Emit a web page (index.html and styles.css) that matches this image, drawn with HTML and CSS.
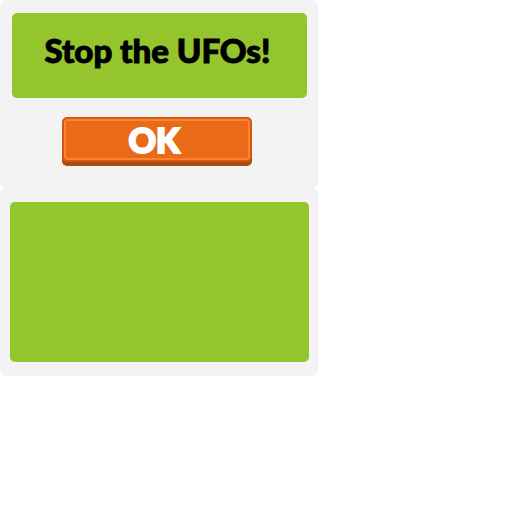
FILE: index.html
```
<!DOCTYPE html>
<html lang="en">
<head>
<meta charset="utf-8">
<meta name="viewport" content="width=device-width, initial-scale=1">
<title>Stop the UFOs!</title>
<link rel="stylesheet" href="styles.css">
</head>
<body>
<main class="stack">
  <section class="panel panel-intro">
    <div class="banner"><h1 class="title">Stop the UFOs!</h1></div>
    <button class="ok" type="button">OK</button>
  </section>
  <section class="panel panel-board">
    <div class="board"></div>
  </section>
</main>
</body>
</html>
```

FILE: styles.css
```
* {
  box-sizing: border-box;
}

body {
  margin: 0;
  background: #fff;
  font-family: Lato, "Open Sans", sans-serif;
}

.stack {
  max-width: 318px;
}

.panel {
  background: #f3f3f3;
  border-radius: 6px;
}

.panel-intro {
  display: flex;
  flex-direction: column;
  align-items: center;
  gap: 19px;
  padding: 13px 11px 22px 12px;
}

.banner {
  align-self: stretch;
  padding: 17px 16px 28px 12px;
  border-radius: 5px;
  background: #94c52d;
}

.title {
  margin: 0;
  color: #000;
  font-size: 33px;
  font-weight: 900;
  line-height: 40px;
  text-align: center;
  white-space: nowrap;
  -webkit-text-stroke: 1px #000;
}

.ok {
  width: 190px;
  max-width: 100%;
  margin: 0 5px 4px 0;
  padding: 2px 10px 1px 4px;
  border: 2px solid #cd5a12;
  border-radius: 5px;
  background: #e96b17;
  box-shadow: inset 0 0 0 2px #ff8233, 0 4px #a94c10;
  color: #fff;
  font: 900 34px/38px Lato, "Open Sans", sans-serif;
  -webkit-text-stroke: 2px #fff;
}

.panel-board {
  padding: 14px 9px 14px 10px;
}

.board {
  min-height: 160px;
  border-radius: 5px;
  background: #94c52d;
}
```
